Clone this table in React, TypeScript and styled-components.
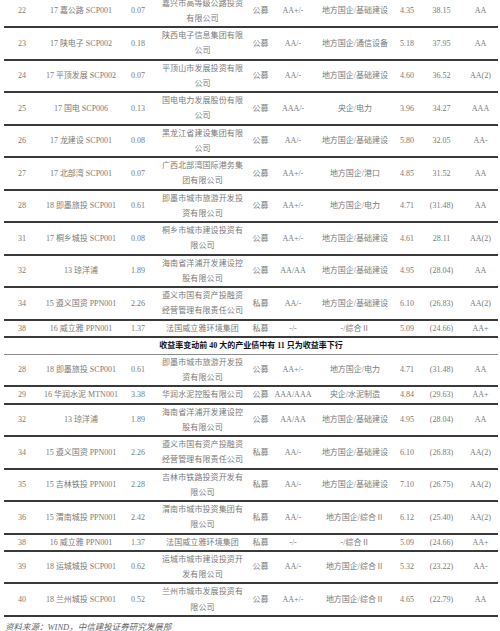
import React from "react";
import styled, { createGlobalStyle } from "styled-components";

const GlobalStyle = createGlobalStyle`
  html, body {
    margin: 0;
    padding: 0;
    background: #ffffff;
  }
  body {
    font-family: "Liberation Serif", "Noto Sans CJK SC", serif;
  }
`;

type Bond = [string, string, string, string, string, string, string, string, string, string];

const before: Bond[] = [
  ["22", "17 嘉公路 SCP001", "0.07", "嘉兴市高等级公路投资有限公司", "公募", "AA+/-", "地方国企/基础建设", "4.35", "38.15", "AA"],
  ["23", "17 陕电子 SCP002", "0.18", "陕西电子信息集团有限公司", "公募", "AA/-", "地方国企/通信设备", "5.18", "37.95", "AA"],
  ["24", "17 平顶发展 SCP002", "0.07", "平顶山市发展投资有限公司", "公募", "AA/-", "地方国企/基础建设", "4.60", "36.52", "AA(2)"],
  ["25", "17 国电 SCP006", "0.13", "国电电力发展股份有限公司", "公募", "AAA/-", "央企/电力", "3.96", "34.27", "AAA"],
  ["26", "17 龙建设 SCP001", "0.08", "黑龙江省建设集团有限公司", "公募", "AA/-", "地方国企/基础建设", "5.80", "32.05", "AA-"],
  ["27", "17 北部湾 SCP001", "0.07", "广西北部湾国际港务集团有限公司", "公募", "AA+/-", "地方国企/港口", "4.85", "31.52", "AA"],
  ["28", "18 即墨旅投 SCP001", "0.61", "即墨市城市旅游开发投资有限公司", "公募", "AA+/-", "地方国企/电力", "4.71", "(31.48)", "AA"],
  ["31", "17 桐乡城投 SCP001", "0.08", "桐乡市城市建设投资有限公司", "公募", "AA+/-", "地方国企/基础建设", "4.61", "28.11", "AA(2)"],
  ["32", "13 琼洋浦", "1.89", "海南省洋浦开发建设控股有限公司", "公募", "AA/AA", "地方国企/基础建设", "4.95", "(28.04)", "AA"],
  ["34", "15 遵义国资 PPN001", "2.26", "遵义市国有资产投融资经营管理有限责任公司", "私募", "AA/-", "地方国企/基础建设", "6.10", "(26.83)", "AA(2)"],
  ["38", "16 威立雅 PPN001", "1.37", "法国威立雅环境集团", "私募", "-/-", "-/综合Ⅱ", "5.09", "(24.66)", "AA+"],
];

const after: Bond[] = [
  ["28", "18 即墨旅投 SCP001", "0.61", "即墨市城市旅游开发投资有限公司", "公募", "AA+/-", "地方国企/电力", "4.71", "(31.48)", "AA"],
  ["29", "16 华润水泥 MTN001", "3.38", "华润水泥控股有限公司", "公募", "AAA/AAA", "央企/水泥制造", "4.84", "(29.63)", "AA+"],
  ["32", "13 琼洋浦", "1.89", "海南省洋浦开发建设控股有限公司", "公募", "AA/AA", "地方国企/基础建设", "4.95", "(28.04)", "AA"],
  ["34", "15 遵义国资 PPN001", "2.26", "遵义市国有资产投融资经营管理有限责任公司", "私募", "AA/-", "地方国企/基础建设", "6.10", "(26.83)", "AA(2)"],
  ["35", "15 吉林铁投 PPN001", "2.28", "吉林市铁路投资开发有限公司", "私募", "AA/-", "地方国企/基础建设", "7.10", "(26.75)", "AA(2)"],
  ["36", "15 渭南城投 PPN001", "2.42", "渭南市城市投资集团有限公司", "私募", "AA/-", "地方国企/综合Ⅱ", "6.12", "(25.40)", "AA(2)"],
  ["38", "16 威立雅 PPN001", "1.37", "法国威立雅环境集团", "私募", "-/-", "-/综合Ⅱ", "5.09", "(24.66)", "AA+"],
  ["39", "18 运城城投 SCP001", "0.62", "运城市城市建设投资开发有限公司", "公募", "AA/-", "地方国企/综合Ⅱ", "5.32", "(23.22)", "AA-"],
  ["40", "18 兰州城投 SCP001", "0.52", "兰州市城市发展投资有限公司", "公募", "AA+/-", "地方国企/综合Ⅱ", "4.65", "(22.79)", "AA"],
];

const Page = styled.div`
  padding: 0 2px 0 4px;
  margin-top: -4.5px;
`;

const Table = styled.div`
  width: 494px;
`;

const Row = styled.div`
  display: grid;
  grid-template-columns: 36px 82px 32px 97px 19px 46px 78px 26px 43px 35px;
  align-items: center;
  border-bottom: 2px solid #3a3a3a;
`;

const Cell = styled.div<{ $wrap?: boolean }>`
  font-size: 8px;
  line-height: 15.25px;
  color: #7a7a7a;
  text-align: center;
  white-space: ${(p) => (p.$wrap ? "normal" : "nowrap")};
  padding: ${(p) => (p.$wrap ? "0 6px" : "0")};
  letter-spacing: ${(p) => (p.$wrap ? "0.1px" : "0")};
`;

const TitleRow = styled.div`
  border-bottom: 1px solid #8a8a8a;
  text-align: center;
  font-size: 8px;
  line-height: 16px;
  font-weight: bold;
  color: #111111;
`;

const Source = styled.div`
  padding: 3px 0 0 1px;
  font-size: 8.5px;
  font-style: italic;
  color: #666666;
`;

function BondRow({ bond }: { bond: Bond }) {
  return (
    <Row>
      {bond.map((v, i) => (
        <Cell key={i} $wrap={i === 3}>
          {v}
        </Cell>
      ))}
    </Row>
  );
}

export default function App() {
  return (
    <Page>
      <GlobalStyle />
      <Table>
        {before.map((b, i) => (
          <BondRow key={"b" + i} bond={b} />
        ))}
        <TitleRow>收益率变动前 40 大的产业债中有 11 只为收益率下行</TitleRow>
        {after.map((b, i) => (
          <BondRow key={"a" + i} bond={b} />
        ))}
      </Table>
      <Source>资料来源：WIND，中信建投证券研究发展部</Source>
    </Page>
  );
}
